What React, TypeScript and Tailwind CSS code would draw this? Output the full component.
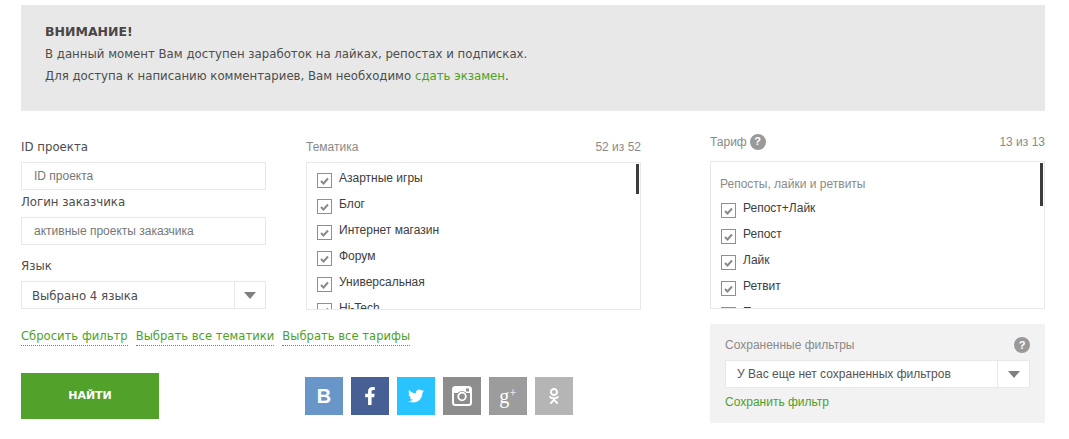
import React from 'react';
import { FaFacebookF, FaTwitter, FaOdnoklassniki } from 'react-icons/fa';

const themes = ["Азартные игры", "Блог", "Интернет магазин", "Форум", "Универсальная", "Hi-Tech"];
const tariffs = ["Репост+Лайк", "Репост", "Лайк", "Ретвит", "Подписка"];

const body = "font-['DejaVu_Sans',sans-serif]";
const arial = "font-['Liberation_Sans',sans-serif]";

function CheckRow({ label }: { label: string }) {
  return (
    <label className="flex items-start h-[26px] shrink-0">
      <span className="w-[15px] h-[15px] border border-[#8f8f8f] flex items-center justify-center bg-white shrink-0 mt-[3px]">
        <svg width="9" height="8" viewBox="0 0 9 8">
          <path d="M1 4 L3.5 6.5 L8 1.5" fill="none" stroke="#8a8a8a" strokeWidth="2" />
        </svg>
      </span>
      <span className="ml-[7px] text-[12px] leading-[16px] text-[#3d3d3d]">{label}</span>
    </label>
  );
}

function Help({ size }: { size: string }) {
  return (
    <span className={`${size} rounded-full bg-[#999] text-white text-[11px] font-bold flex items-center justify-center ${arial}`}>?</span>
  );
}

function Caret() {
  return <span className="w-0 h-0 border-x-[6px] border-x-transparent border-t-[7px] border-t-[#7f7f7f]" />;
}

function Social({ bg, children }: { bg: string; children: React.ReactNode }) {
  return <a className={`w-[38px] h-[38px] flex items-center justify-center text-white ${bg}`}>{children}</a>;
}

export default function App() {
  return (
    <div className={`w-[1069px] h-[439px] overflow-hidden bg-white pt-[5px] px-[21px] ${body}`}>
      <div className="w-[1024px] h-[106px] bg-[#e8e8e8] pl-[24px] pt-[18px] text-[11.75px] text-[#4d4d4d]">
        <h2 className="text-[12.5px] leading-[18px] font-bold text-[#4a4545]">ВНИМАНИЕ!</h2>
        <p className="leading-[22px] mt-[2px]">В данный момент Вам доступен заработок на лайках, репостах и подписках.</p>
        <p className="leading-[22px]">
          Для доступа к написанию комментариев, Вам необходимо <a className="text-[#4f9f2b]">сдать экзамен</a>.
        </p>
      </div>

      <div className="flex mt-[19px] w-[1024px]">
        <div className="w-[620px] shrink-0">
          <div className="flex">
            <div className="w-[245px] shrink-0">
              <div className="h-[32px] pt-[8px] text-[11.75px] leading-[18px] text-[#4d4d4d]">ID проекта</div>
              <input
                placeholder="ID проекта"
                className={`block w-full h-[28px] border border-[#e8e8e8] pl-[12px] text-[12px] outline-none placeholder:text-[#777] ${arial}`}
              />
              <div className="h-[27px] pt-[3px] text-[11.75px] leading-[18px] text-[#4d4d4d]">Логин заказчика</div>
              <input
                placeholder="активные проекты заказчика"
                className={`block w-full h-[28px] border border-[#e8e8e8] pl-[12px] text-[12px] outline-none placeholder:text-[#777] ${arial}`}
              />
              <div className="h-[36px] pt-[12px] text-[11.75px] leading-[18px] text-[#4d4d4d]">Язык</div>
              <div className="flex h-[28px] border border-[#e8e8e8] text-[11.75px] text-[#4d4d4d]">
                <span className="flex-1 pl-[10px] leading-[28px]">Выбрано 4 языка</span>
                <span className="w-[31px] border-l border-[#e8e8e8] flex items-center justify-center"><Caret /></span>
              </div>
            </div>

            <div className="w-[335px] ml-[40px] shrink-0">
              <div className={`flex justify-between h-[32px] pt-[8px] text-[12px] leading-[18px] text-[#8a8a8a] ${arial}`}>
                <span>Тематика</span>
                <span>52 из 52</span>
              </div>
              <div className={`relative h-[148px] border border-[#e8e8e8] pl-[10px] pt-[7px] overflow-hidden ${arial}`}>
                {themes.map((t) => <CheckRow key={t} label={t} />)}
                <span className="absolute right-[1px] top-[1px] w-[3px] h-[30px] bg-[#3c3c3c]" />
              </div>
            </div>
          </div>

          <div className="flex gap-[8px] mt-[17px] text-[11.6px] leading-[18px] text-[#4f9f2b]">
            <a className="border-b border-dotted border-[#4f9f2b]">Сбросить фильтр</a>
            <a className="border-b border-dotted border-[#4f9f2b]">Выбрать все тематики</a>
            <a className="border-b border-dotted border-[#4f9f2b]">Выбрать все тарифы</a>
          </div>

          <div className="flex items-center mt-[27px]">
            <button className="w-[138px] h-[46px] bg-[#52a12b] text-white text-[11px] font-bold">НАЙТИ</button>
            <div className="flex gap-[8px] ml-[146px]">
              <Social bg="bg-[#6896c8]"><span className={`text-[20px] font-bold ${arial}`}>В</span></Social>
              <Social bg="bg-[#466095]"><FaFacebookF size={18} /></Social>
              <Social bg="bg-[#29c3ff]"><FaTwitter size={16} /></Social>
              <Social bg="bg-[#8d8d8d]">
                <svg width="20" height="20" viewBox="0 0 20 20">
                  <rect x="1" y="1" width="18" height="18" rx="2.5" fill="none" stroke="#fff" strokeWidth="2" />
                  <rect x="1" y="1" width="18" height="6" fill="#fff" />
                  <circle cx="10" cy="10.5" r="5.5" fill="#8d8d8d" />
                  <circle cx="10" cy="10.5" r="3.8" fill="none" stroke="#fff" strokeWidth="1.8" />
                  <rect x="14" y="2.5" width="3" height="3" fill="#8d8d8d" />
                </svg>
              </Social>
              <Social bg="bg-[#9c9c9c]">
                <span className="font-['Liberation_Serif',serif] text-[20px] leading-none">g<span className="text-[13px] relative top-[-6px]">+</span></span>
              </Social>
              <Social bg="bg-[#b5b5b5]"><FaOdnoklassniki size={16} /></Social>
            </div>
          </div>
        </div>

        <div className="w-[335px] ml-[69px] shrink-0">
          <div className={`flex justify-between items-center h-[31px] pb-[8px] text-[12px] text-[#8a8a8a] ${arial}`}>
            <span className="flex items-center gap-[3px]">Тариф <Help size="w-[16px] h-[16px]" /></span>
            <span>13 из 13</span>
          </div>
          <div className={`relative h-[148px] border border-[#e8e8e8] pl-[10px] pt-[14px] overflow-hidden ${arial}`}>
            <div className="text-[12px] leading-[16px] text-[#8a8a8a] mb-[8px] -ml-[1px]">Репосты, лайки и ретвиты</div>
            {tariffs.map((t) => <CheckRow key={t} label={t} />)}
            <span className="absolute right-[1px] top-[1px] w-[3px] h-[43px] bg-[#3c3c3c]" />
          </div>

          <div className={`mt-[15px] h-[99px] bg-[#f2f2f2] px-[15px] pt-[13px] ${arial}`}>
            <div className="flex justify-between items-center h-[16px] text-[12px] text-[#8a8a8a]">
              <span>Сохраненные фильтры</span>
              <Help size="w-[16px] h-[16px]" />
            </div>
            <div className="flex h-[28px] mt-[7px] bg-white border border-[#e8e8e8] text-[12px] text-[#555]">
              <span className="flex-1 pl-[11px] leading-[26px]">У Вас еще нет сохраненных фильтров</span>
              <span className="w-[32px] border-l border-[#e8e8e8] flex items-center justify-center"><Caret /></span>
            </div>
            <a className="block mt-[6px] text-[12px] leading-[16px] text-[#4f9f2b]">Сохранить фильтр</a>
          </div>
        </div>
      </div>
    </div>
  );
}
